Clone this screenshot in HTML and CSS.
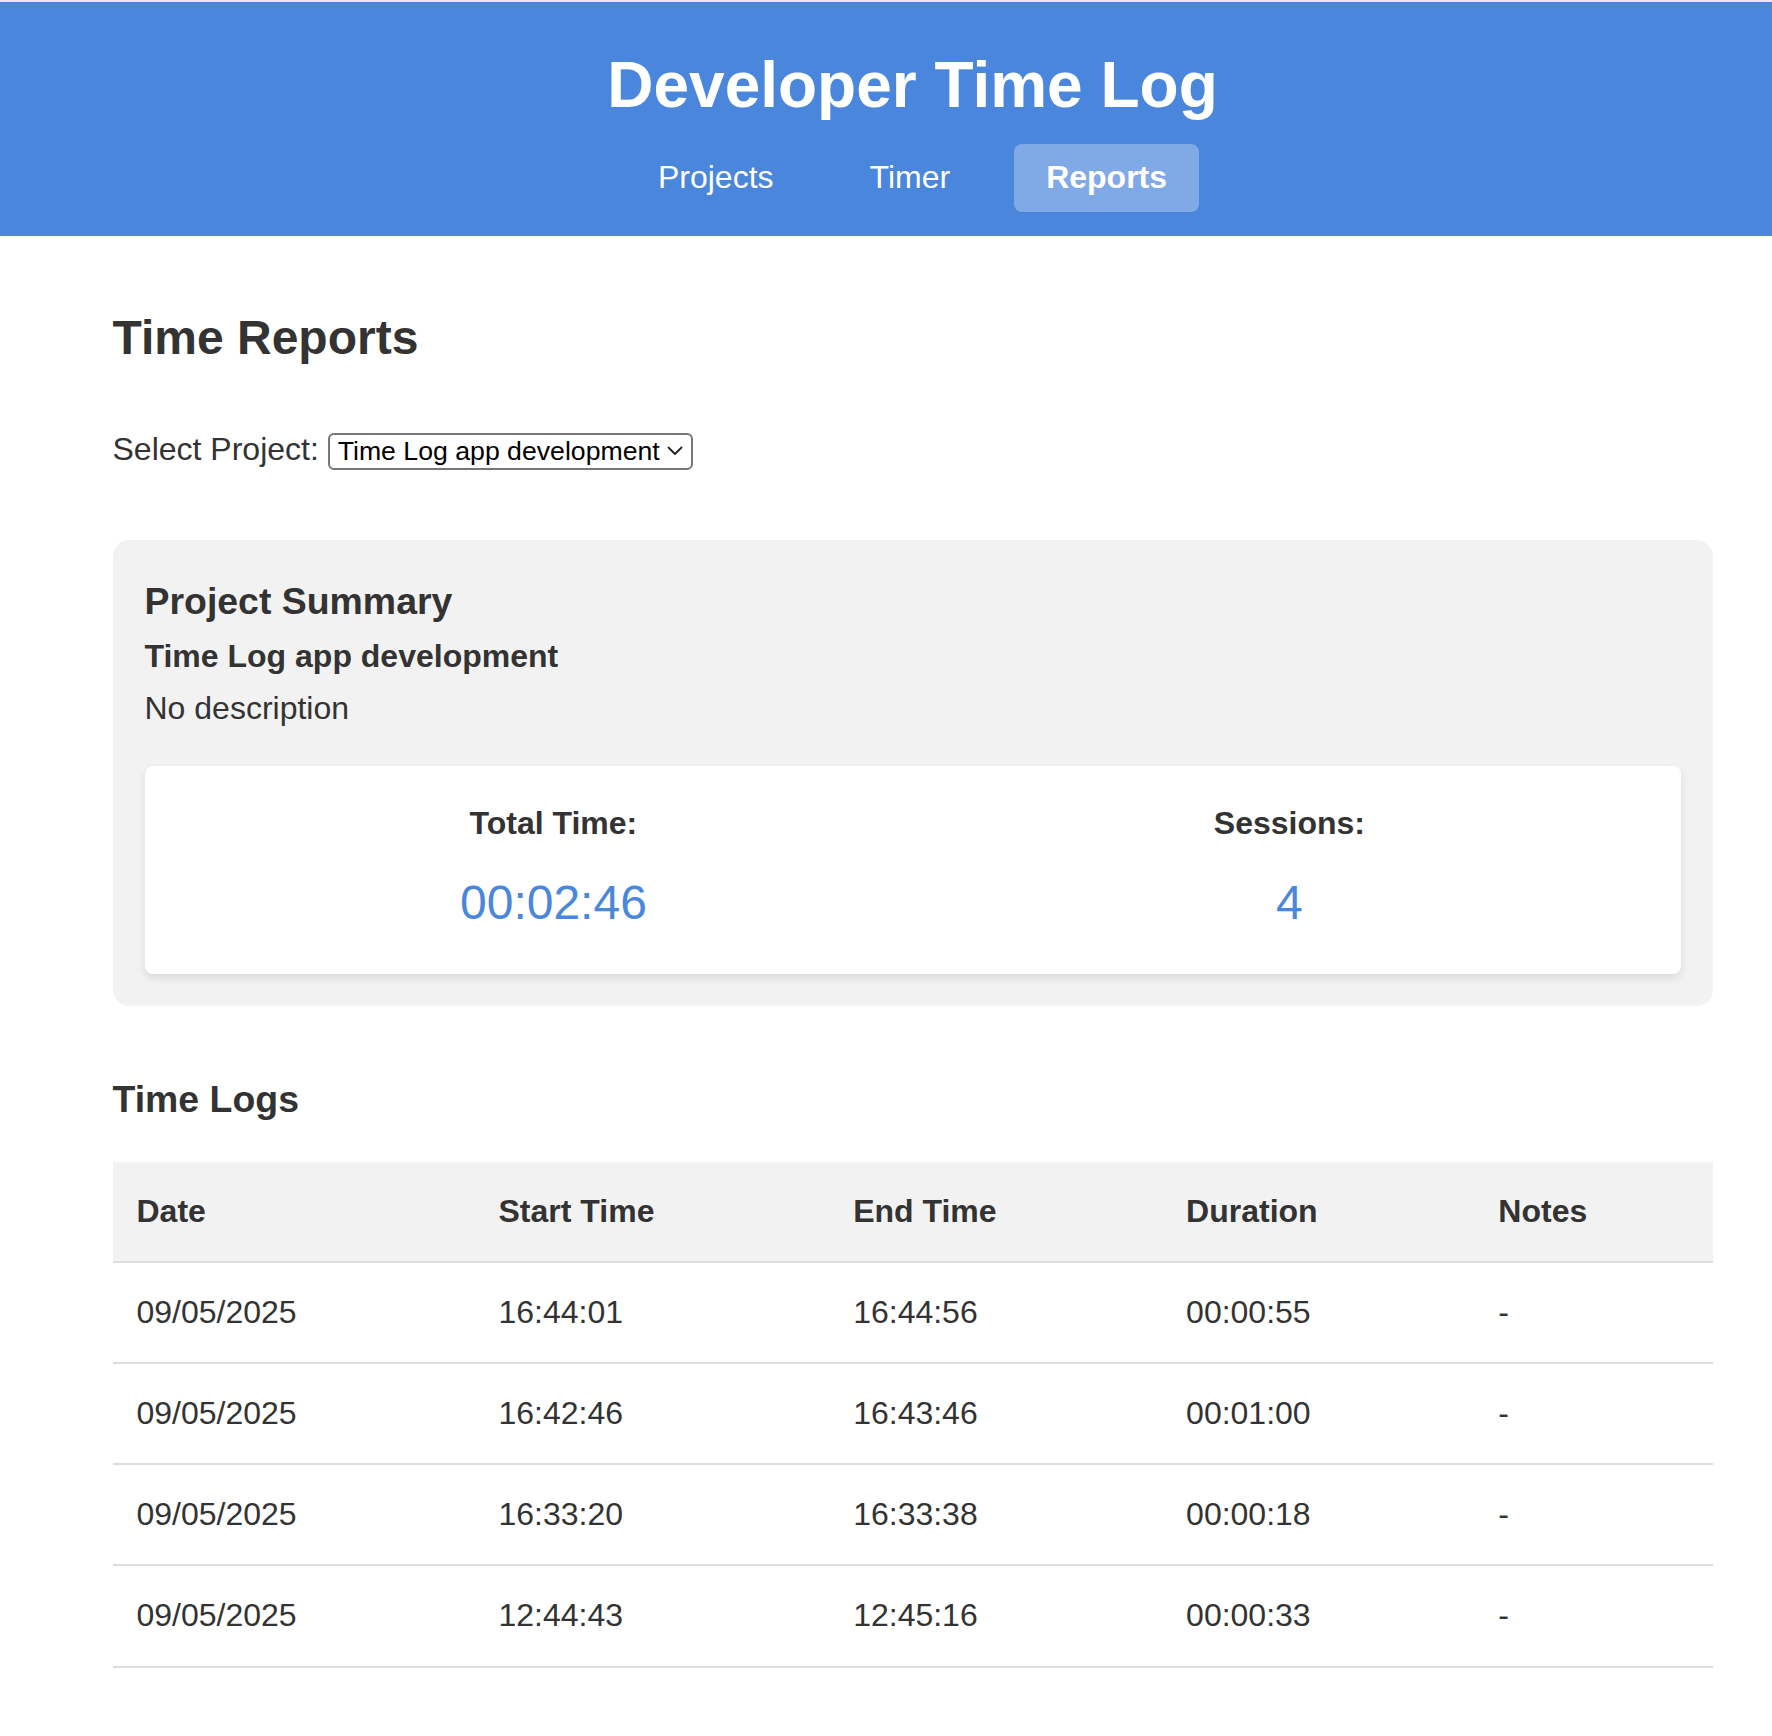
FILE: index.html
```html
<!DOCTYPE html>
<html lang="en">
<head>
<meta charset="utf-8">
<title>Developer Time Log</title>
<link rel="stylesheet" href="styles.css">
</head>
<body>
<div class="app">
  <header class="site-header">
    <h1 class="site-title">Developer Time Log</h1>
    <nav class="nav">
      <a class="nav-link" href="#">Projects</a>
      <a class="nav-link" href="#">Timer</a>
      <a class="nav-link is-active" href="#">Reports</a>
    </nav>
  </header>

  <main class="reports">
    <h2 class="page-title">Time Reports</h2>

    <div class="project-picker">
      <label for="project">Select Project:</label>
      <span class="select-wrap"><select id="project"><option>Time Log app development</option></select><svg class="select-chevron" width="16" height="10" viewBox="0 0 16 10" aria-hidden="true"><polyline points="1.5,1.5 8,8 14.5,1.5" fill="none" stroke="#222" stroke-width="1.8" stroke-linecap="round" stroke-linejoin="round"/></svg></span>
    </div>

    <section class="summary">
      <h3 class="summary-title">Project Summary</h3>
      <h4 class="summary-project">Time Log app development</h4>
      <p class="summary-desc">No description</p>
      <div class="stats">
        <div class="stat">
          <div class="stat-label">Total Time:</div>
          <div class="stat-value">00:02:46</div>
        </div>
        <div class="stat">
          <div class="stat-label">Sessions:</div>
          <div class="stat-value">4</div>
        </div>
      </div>
    </section>

    <h3 class="logs-title">Time Logs</h3>
    <table class="logs">
      <thead>
        <tr><th>Date</th><th>Start Time</th><th>End Time</th><th>Duration</th><th>Notes</th></tr>
      </thead>
      <tbody>
        <tr><td>09/05/2025</td><td>16:44:01</td><td>16:44:56</td><td>00:00:55</td><td>-</td></tr>
        <tr><td>09/05/2025</td><td>16:42:46</td><td>16:43:46</td><td>00:01:00</td><td>-</td></tr>
        <tr><td>09/05/2025</td><td>16:33:20</td><td>16:33:38</td><td>00:00:18</td><td>-</td></tr>
        <tr><td>09/05/2025</td><td>12:44:43</td><td>12:45:16</td><td>00:00:33</td><td>-</td></tr>
      </tbody>
    </table>
  </main>
</div>
</body>
</html>
```

FILE: styles.css
```css
html {
  overflow-x: hidden;
}

body {
  margin: 0;
  border-top: 2px solid #f1e3ea;
  background: #fff;
  color: #333;
  font-family: "Liberation Sans", Arial, Helvetica, sans-serif;
  font-size: 32px;
  line-height: 1.6;
}

.app {
  width: 1825px;
}

/* Header */
.site-header {
  background: #4a86db;
  color: #fff;
  text-align: center;
  padding: 32px 0 24px;
}

.site-title {
  margin: 0 0 8px;
  font-size: 64px;
  font-weight: bold;
}

.nav {
  display: flex;
  justify-content: center;
  gap: 32px;
}

.nav-link {
  color: #fff;
  text-decoration: none;
  padding: 8px 32px;
  border-radius: 8px;
}

.nav-link.is-active {
  background: rgba(255, 255, 255, 0.3);
  font-weight: bold;
}

/* Main */
.reports {
  width: 1600px;
  margin: 0 auto;
  padding-top: 40px;
}

.page-title {
  margin: 24px 0 48px;
  font-size: 48px;
}

.project-picker {
  margin-bottom: 64px;
}

.select-wrap {
  position: relative;
  display: inline-block;
}

.select-wrap select {
  appearance: none;
  -webkit-appearance: none;
  width: 365px;
  height: 37px;
  margin: 0;
  padding: 0 22px 0 8px;
  border: 2px solid #767676;
  border-radius: 6px;
  background: #fff;
  color: #000;
  font-family: "Liberation Sans", Arial, Helvetica, sans-serif;
  font-size: 26.67px;
  line-height: normal;
}

.select-chevron {
  position: absolute;
  right: 10px;
  top: 50%;
  margin-top: -4px;
  pointer-events: none;
}

/* Summary */
.summary {
  background: #f2f2f2;
  border-radius: 16px;
  padding: 32px;
  margin-bottom: 64px;
}

.summary-title {
  margin: 0;
  font-size: 37.44px;
}

.summary-project {
  margin: 0;
  font-size: 32px;
}

.summary-desc {
  margin: 0 0 32px;
}

.stats {
  display: flex;
  justify-content: space-around;
  padding: 32px;
  background: #fff;
  border-radius: 8px;
  box-shadow: 0 4px 8px rgba(0, 0, 0, 0.1);
  text-align: center;
}

.stat-label {
  font-weight: bold;
}

.stat-value {
  margin-top: 16px;
  font-size: 48px;
  color: #4a86db;
}

/* Logs */
.logs-title {
  margin: 0 0 32px;
  font-size: 37.44px;
}

.logs {
  width: 100%;
  border-collapse: collapse;
}

.logs th,
.logs td {
  padding: 24px;
  text-align: left;
  border-bottom: 2px solid #ddd;
}

.logs th {
  background: #f2f2f2;
  font-weight: bold;
}
```
